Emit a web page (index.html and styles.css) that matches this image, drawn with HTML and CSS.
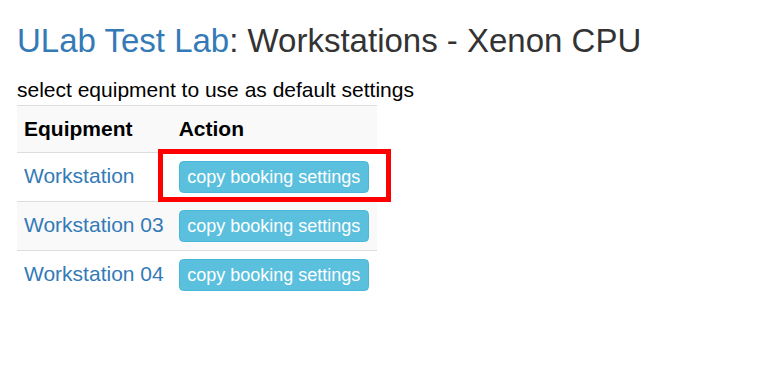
FILE: index.html
```html
<!DOCTYPE html>
<html lang="en"><head>
  <meta charset="UTF-8"><meta name="viewport" content="width=device-width, initial-scale=1.0">
  <title>Workstations - Xenon CPU</title>
  <link rel="stylesheet" href="styles.css">
</head><body>

<div class="page">
  <h2 class="title"><a href="#">ULab Test Lab</a>: Workstations - Xenon CPU</h2>
  <p class="hint">select equipment to use as default settings</p>
  <table class="equip">
    <tr><th>Equipment</th><th>Action</th></tr>
    <tr>
      <td><a href="#">Workstation</a></td>
      <td class="mark-cell"><button class="btn-info">copy booking settings</button><span class="mark"></span></td>
    </tr>
    <tr>
      <td><a href="#">Workstation 03</a></td>
      <td><button class="btn-info">copy booking settings</button></td>
    </tr>
    <tr>
      <td><a href="#">Workstation 04</a></td>
      <td><button class="btn-info">copy booking settings</button></td>
    </tr>
  </table>
</div>

</body></html>
```

FILE: styles.css
```css
body{margin:0;font-family:"Liberation Sans",Arial,sans-serif;font-size:21px;line-height:1.42857;color:#000;background:#fff;}
a{color:#337ab7;text-decoration:none;}
.page{padding:0 17px;}
.title{font-size:33px;font-weight:normal;line-height:1.1;color:#333;margin:23px 0 16px;}
.hint{margin:0;}
.equip{border-collapse:collapse;border-spacing:0;}
.equip th,.equip td{padding:8px 8px 8px 7px;border-top:1px solid #ddd;text-align:left;vertical-align:top;}
.equip th{font-weight:bold;}
.equip tr:nth-child(odd){background:#f9f9f9;}
.btn-info{font-family:inherit;font-size:18px;line-height:1.5;color:#fff;background:#5bc0de;border:1px solid #46b8da;border-radius:4.5px;padding:1.5px 7.5px;vertical-align:top;cursor:pointer;}
.mark-cell{position:relative;}
.mark{position:absolute;left:-14px;top:-4px;width:223px;height:43px;border:5px solid #f00;pointer-events:none;}
```
